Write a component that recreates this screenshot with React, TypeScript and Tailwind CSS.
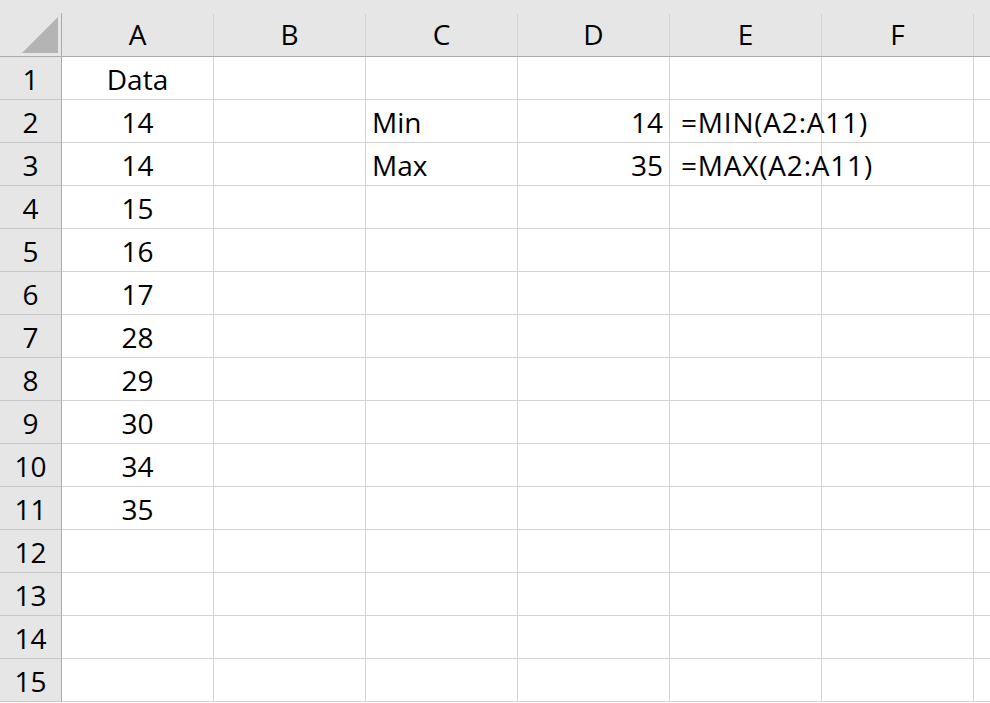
import React from 'react';

const cols = ['A', 'B', 'C', 'D', 'E', 'F', ''];

type Cell = { text: string; align?: 'left' | 'center' | 'right' };

// cell contents keyed by row, then column index (0 = A)
const data: Record<number, Record<number, Cell>> = {
  1: { 0: { text: 'Data', align: 'center' } },
  2: { 0: { text: '14', align: 'center' }, 2: { text: 'Min' }, 3: { text: '14', align: 'right' }, 4: { text: '=MIN(A2:A11)' } },
  3: { 0: { text: '14', align: 'center' }, 2: { text: 'Max' }, 3: { text: '35', align: 'right' }, 4: { text: '=MAX(A2:A11)' } },
  4: { 0: { text: '15', align: 'center' } },
  5: { 0: { text: '16', align: 'center' } },
  6: { 0: { text: '17', align: 'center' } },
  7: { 0: { text: '28', align: 'center' } },
  8: { 0: { text: '29', align: 'center' } },
  9: { 0: { text: '30', align: 'center' } },
  10: { 0: { text: '34', align: 'center' } },
  11: { 0: { text: '35', align: 'center' } },
};

const rows = Array.from({ length: 15 }, (_, i) => i + 1);

export default function App() {
  return (
    <div
      className="w-[990px] h-[703px] overflow-hidden bg-white text-[28px] text-black"
      style={{ fontFamily: '"Open Sans", "Liberation Sans", sans-serif' }}
    >
      <div className="grid grid-cols-[62px_repeat(6,152px)_17px]">
        {/* Header row */}
        <div className="h-[57px] bg-[#e6e6e6] border-b border-[#ababab] flex items-end">
          <div className="h-[43px] w-full border-r border-[#ababab] flex items-end justify-end pr-[3px] pb-[3px]">
            <svg width="36" height="36" viewBox="0 0 36 36">
              <polygon points="0,36 36,36 36,0" fill="#b4b4b4" />
            </svg>
          </div>
        </div>
        {cols.map((c, ci) => (
          <div key={ci} className="h-[57px] bg-[#e6e6e6] border-b border-[#ababab] flex items-end">
            <div
              className={`h-[42px] w-full flex items-center justify-center pb-[2px] ${
                ci < 6 ? 'border-r border-[#d4d4d4]' : ''
              }`}
            >
              {c}
            </div>
          </div>
        ))}

        {/* Body rows */}
        {rows.map((r) => (
          <React.Fragment key={r}>
            <div className="h-[43px] bg-[#e6e6e6] border-r border-b border-r-[#ababab] border-b-[#c8c8c8] flex items-center justify-center pt-[1px]">
              {r}
            </div>
            {cols.map((c, ci) => {
              const cell = data[r]?.[ci];
              const align =
                cell?.align === 'center'
                  ? 'justify-center'
                  : cell?.align === 'right'
                  ? 'justify-end pr-[6px]'
                  : ci === 4
                  ? 'justify-start pl-[11px] tracking-[0.8px]'
                  : 'justify-start pl-[6px]';
              return (
                <div
                  key={ci}
                  className={`h-[43px] border-b border-[#d4d4d4] flex items-center whitespace-nowrap pt-[2px] ${
                    ci < 6 ? 'border-r' : ''
                  } ${align}`}
                >
                  {cell?.text}
                </div>
              );
            })}
          </React.Fragment>
        ))}
      </div>
    </div>
  );
}
